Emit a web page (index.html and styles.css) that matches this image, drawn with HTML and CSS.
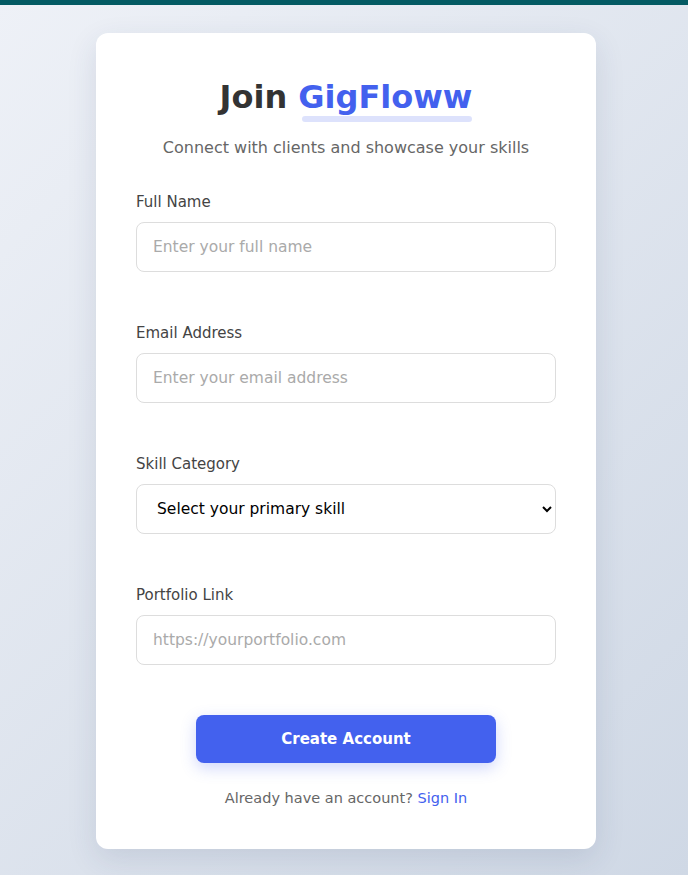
FILE: index.html
```html
<!DOCTYPE html>
<html lang="en">
<head>
<meta charset="utf-8">
<title>Join GigFloww</title>
<link rel="stylesheet" href="styles.css">
</head>
<body>
<div class="topbar"></div>
<main class="page">
  <section class="card">
    <h1 class="title">Join <span class="brand">GigFloww</span></h1>
    <p class="subtitle">Connect with clients and showcase your skills</p>
    <form class="form">
      <div class="field">
        <label class="label" for="name">Full Name</label>
        <input class="input" id="name" type="text" placeholder="Enter your full name">
      </div>
      <div class="field">
        <label class="label" for="email">Email Address</label>
        <input class="input" id="email" type="email" placeholder="Enter your email address">
      </div>
      <div class="field">
        <label class="label" for="skill">Skill Category</label>
        <select class="input select" id="skill">
          <option>Select your primary skill</option>
        </select>
      </div>
      <div class="field">
        <label class="label" for="portfolio">Portfolio Link</label>
        <input class="input" id="portfolio" type="url" placeholder="https://yourportfolio.com">
      </div>
      <button class="submit" type="button">Create Account</button>
    </form>
    <p class="footer">Already have an account? <a class="link" href="#">Sign In</a></p>
  </section>
</main>
</body>
</html>
```
FILE: styles.css
```css
* { box-sizing: border-box; }
html, body { margin: 0; padding: 0; }
body {
  min-height: 875px;
  font-family: "DejaVu Sans", sans-serif;
  background: linear-gradient(135deg, #eef1f7 0%, #cfd8e5 100%);
}
.topbar { height: 5px; background: #035a63; }
.page { padding: 28px 0 28px 4px; }
.card {
  width: 500px;
  margin: 0 auto;
  background: #fff;
  border-radius: 12px;
  padding: 40px 40px 40px;
  box-shadow: 0 10px 30px rgba(40, 60, 100, 0.12);
}
.title {
  margin: 2px 0 0;
  text-align: center;
  font-size: 32px;
  line-height: 44px;
  font-weight: 600;
  color: #333;
}
.brand { color: #4361ee; position: relative; }
.brand::after {
  content: "";
  position: absolute;
  left: 4px; right: 0; bottom: -6px;
  height: 6px;
  border-radius: 3px;
  background: rgba(67, 97, 238, 0.18);
}
.subtitle {
  margin: 18px 0 0;
  text-align: center;
  color: #666;
  font-size: 16px;
  line-height: 22px;
}
.form { margin-top: 32px; display: flex; flex-direction: column; }
.field { display: flex; flex-direction: column; gap: 9px; margin-bottom: 50px; }
.label { font-size: 15px; line-height: 22px; font-weight: 500; color: #444; }
.input {
  height: 50px;
  width: 100%;
  border: 1px solid #ddd;
  border-radius: 8px;
  padding: 0 16px;
  font-family: inherit;
  font-size: 15.5px;
  color: #333;
  background: #fff;
  outline: none;
}
.input::placeholder { color: #aaa; }
.select { padding: 0 12px 0 16px; color: #000; }
.submit {
  width: 300px;
  height: 48px;
  align-self: center;
  border: 0;
  border-radius: 8px;
  background: #4361ee;
  color: #fff;
  font-family: inherit;
  font-size: 15px;
  font-weight: 600;
  box-shadow: 0 5px 15px rgba(67, 97, 238, 0.25);
  cursor: pointer;
}
.footer {
  margin: 24px 0 0;
  text-align: center;
  font-size: 14.5px;
  line-height: 22px;
  color: #666;
}
.link { color: #4361ee; font-weight: 500; text-decoration: none; }
```
